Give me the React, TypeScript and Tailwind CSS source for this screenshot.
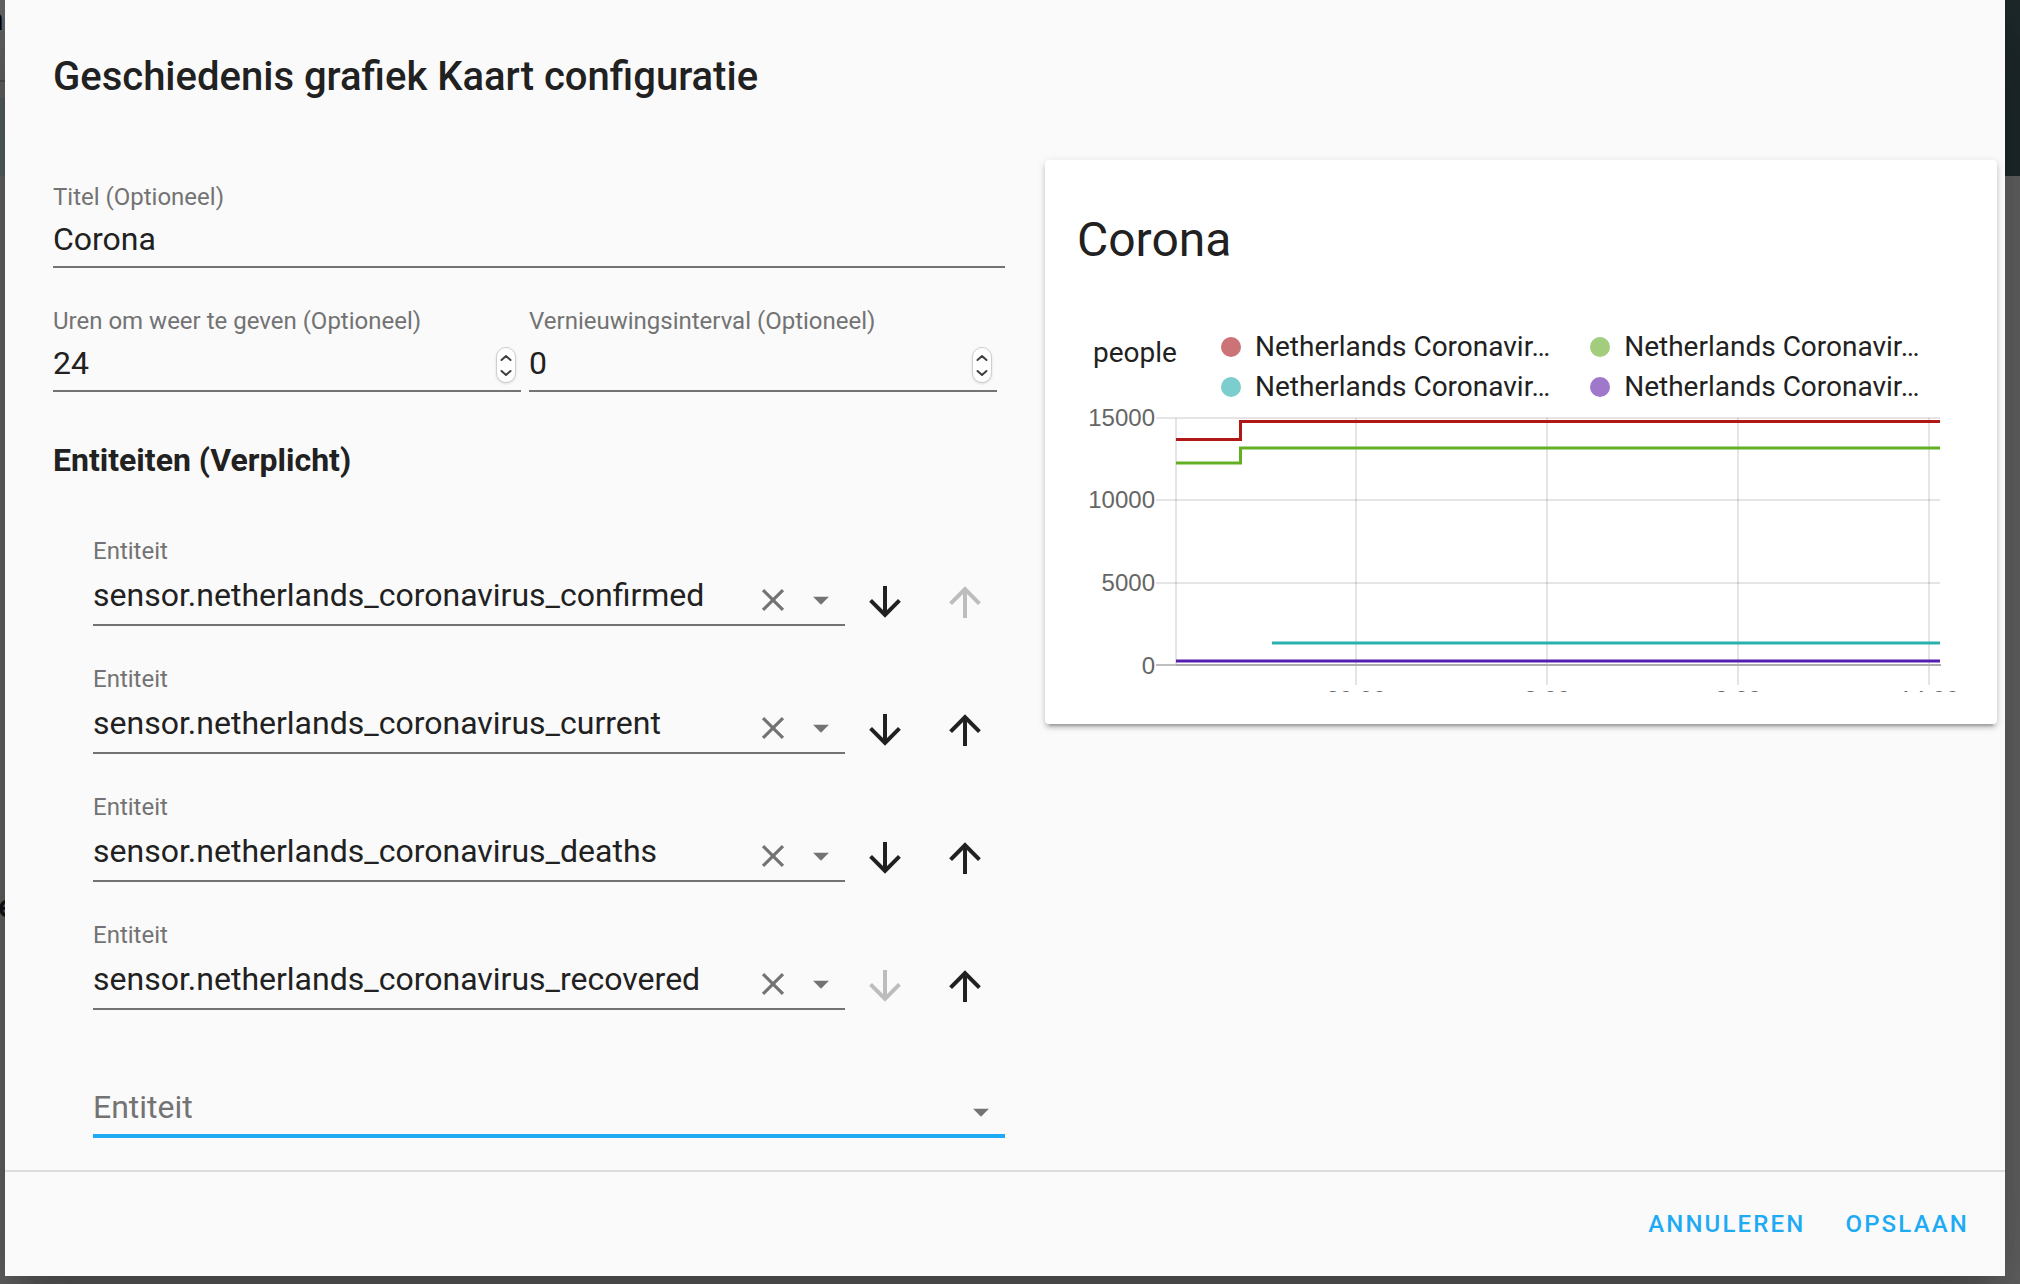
import { useState } from "react";
import type { ReactNode } from "react";

const ARROW_DOWN =
  "M11,4H13V16L18.5,10.5L19.92,11.92L12,19.84L4.08,11.92L5.5,10.5L11,16V4Z";
const ARROW_UP =
  "M13,20H11V8L5.5,13.5L4.08,12.08L12,4.16L19.92,12.08L18.5,13.5L13,8V20Z";
const CLOSE =
  "M19 6.41L17.59 5 12 10.59 6.41 5 5 6.41 10.59 12 5 17.59 6.41 19 12 13.41 17.59 19 19 17.59 13.41 12z";
const CARET = "M7 10l5 5 5-5z";

const entities = [
  "sensor.netherlands_coronavirus_confirmed",
  "sensor.netherlands_coronavirus_current",
  "sensor.netherlands_coronavirus_deaths",
  "sensor.netherlands_coronavirus_recovered",
];

const legend = [
  { id: "confirmed", dot: "bg-[#cb7377]" },
  { id: "current", dot: "bg-[#a1cd7d]" },
  { id: "deaths", dot: "bg-[#7bcecd]" },
  { id: "recovered", dot: "bg-[#9f78cc]" },
];

const yTicks = [
  { label: "15000", y: 8 },
  { label: "10000", y: 90 },
  { label: "5000", y: 173 },
];

const xTicks = [
  { label: "20:00", x: 279 },
  { label: "2:00", x: 470 },
  { label: "8:00", x: 661 },
  { label: "14:00", x: 852 },
];

const series = [
  { color: "#571cb0", points: "99,251 863,251" },
  { color: "#2bb0b0", points: "195,233 863,233" },
  { color: "#64b023", points: "99,53 163.5,53 163.5,38 863,38" },
  { color: "#b01717", points: "99,29.5 163.5,29.5 163.5,11.5 863,11.5" },
];

function Icon({ path, className }: { path: string; className: string }) {
  return (
    <svg viewBox="0 0 24 24" className={className} fill="currentColor" aria-hidden="true">
      <path d={path} />
    </svg>
  );
}

function Field({
  id,
  label,
  value,
  type = "text",
  children,
}: {
  id: string;
  label: string;
  value: string;
  type?: string;
  children?: ReactNode;
}) {
  return (
    <div className="flex flex-col border-b-2 border-[#737373] pb-0.5">
      <label htmlFor={id} className="text-2xl leading-[34px] text-[#737373]">
        {label}
      </label>
      <div className="flex h-[50px]">
        <input
          id={id}
          type={type}
          defaultValue={value}
          className="w-full min-w-0 flex-1 bg-transparent text-[32px] outline-none [appearance:textfield] [&::-webkit-inner-spin-button]:appearance-none"
        />
        {children}
      </div>
    </div>
  );
}

function Spinner({ label }: { label: string }) {
  return (
    <div className="mr-[5px] mb-[5px] flex h-9 w-5 flex-col self-end rounded-full border border-[#cfcfcf] bg-white py-0.5 text-[#404040] shadow-sm">
      <button type="button" aria-label={`${label} verhogen`} className="flex flex-1 items-center justify-center">
        <svg viewBox="0 0 12 8" className="h-2 w-3" fill="none" stroke="currentColor" strokeWidth="2" strokeLinecap="round" strokeLinejoin="round">
          <path d="M1.5 6l4.5-4 4.5 4" />
        </svg>
      </button>
      <button type="button" aria-label={`${label} verlagen`} className="flex flex-1 items-center justify-center">
        <svg viewBox="0 0 12 8" className="h-2 w-3" fill="none" stroke="currentColor" strokeWidth="2" strokeLinecap="round" strokeLinejoin="round">
          <path d="M1.5 2l4.5 4 4.5-4" />
        </svg>
      </button>
    </div>
  );
}

function MoveButton({ path, label, disabled }: { path: string; label: string; disabled: boolean }) {
  return (
    <button
      type="button"
      aria-label={label}
      disabled={disabled}
      className="flex h-12 w-20 items-center justify-center disabled:text-[#bdbdbd]"
    >
      <Icon path={path} className="size-12" />
    </button>
  );
}

function EntityRow({ value, index, count }: { value: string; index: number; count: number }) {
  const id = `entity-${index}`;
  return (
    <li className="flex items-end">
      <div className="flex min-w-0 flex-1 flex-col border-b-2 border-[#737373] pb-1">
        <label htmlFor={id} className="text-2xl leading-[38px] text-[#737373]">
          Entiteit
        </label>
        <div className="flex h-[50px]">
          <input
            id={id}
            type="text"
            defaultValue={value}
            className="w-full min-w-0 flex-1 bg-transparent text-[32px] outline-none"
          />
          <button type="button" aria-label="Wissen" className="flex h-10 w-12 items-center justify-center self-end text-[#737373]">
            <Icon path={CLOSE} className="size-[38px]" />
          </button>
          <button type="button" aria-label="Openen" className="flex h-10 w-12 items-center justify-center self-end text-[#737373]">
            <Icon path={CARET} className="size-[38px]" />
          </button>
        </div>
      </div>
      <MoveButton path={ARROW_DOWN} label="Omlaag" disabled={index === count - 1} />
      <MoveButton path={ARROW_UP} label="Omhoog" disabled={index === 0} />
    </li>
  );
}

function HistoryChart() {
  return (
    <svg viewBox="0 -4 888 286" className="block w-full overflow-hidden" role="img" aria-label="Corona">
      <g stroke="#000000" strokeOpacity="0.1" strokeWidth="2">
        {yTicks.map((t) => (
          <line key={t.label} x1="79" x2="863" y1={t.y} y2={t.y} />
        ))}
        <line x1="99" x2="99" y1="8" y2="256" />
        {xTicks.map((t) => (
          <line key={t.label} x1={t.x} x2={t.x} y1="8" y2="275" />
        ))}
      </g>
      <line x1="79" x2="99" y1="255" y2="255" stroke="#bfbfbf" strokeWidth="2" />
      <line x1="99" x2="864" y1="255" y2="255" stroke="#adadad" strokeWidth="2" />
      {series.map((s) => (
        <polyline key={s.color} points={s.points} fill="none" stroke={s.color} strokeWidth="3" />
      ))}
      <g fill="#666666" fontSize="24" className="font-['Liberation_Sans',Arial,sans-serif]">
        {[...yTicks, { label: "0", y: 256 }].map((t) => (
          <text key={t.label} x="78" y={t.y + 8} textAnchor="end">
            {t.label}
          </text>
        ))}
        {xTicks.map((t) => (
          <text key={t.label} x={t.x} y="298" textAnchor="middle">
            {t.label}
          </text>
        ))}
      </g>
    </svg>
  );
}

function Backdrop() {
  return (
    <div aria-hidden="true" className="absolute inset-0 flex flex-col overflow-hidden bg-[#646464]">
      <div className="flex h-44 justify-between">
        <div className="flex w-10 flex-col">
          <div className="flex h-20 items-start text-[32px] leading-[38px] text-black">
            <span className="-ml-3.5">n</span>
          </div>
          <div className="h-0.5 bg-[#505050]" />
          <div className="mt-4 flex-1 bg-[#566064]" />
        </div>
        <div className="w-20 bg-[#1e292c]" />
      </div>
      <div className="mt-[708px] flex h-11 text-[32px] leading-[44px] font-medium text-[#141414]">
        <span className="-ml-0.5">e</span>
      </div>
    </div>
  );
}

export default function App() {
  const [newEntity, setNewEntity] = useState("");

  return (
    <div className="relative min-h-screen overflow-hidden pr-[15px] pb-2 pl-[5px] font-[Roboto,sans-serif] text-[#212121]">
      <Backdrop />
      <div
        role="dialog"
        aria-labelledby="dialog-title"
        className="relative flex min-h-[calc(100vh-8px)] flex-col bg-[#fafafa] shadow-[0_22px_30px_-14px_rgba(0,0,0,0.2),0_48px_76px_6px_rgba(0,0,0,0.14),0_18px_92px_16px_rgba(0,0,0,0.12)]"
      >
        <h2 id="dialog-title" className="px-12 pt-[52px] text-[40px] leading-[50px] font-medium">
          Geschiedenis grafiek Kaart configuratie
        </h2>

        <div className="mt-[58px] grid flex-1 grid-cols-2 items-start gap-10 pr-2 pb-8 pl-12">
          <form className="min-w-0 pt-5">
            <Field id="title" label="Titel (Optioneel)" value="Corona" />
            <div className="mt-9 grid grid-cols-2 gap-2 pr-2">
              <Field id="hours" label="Uren om weer te geven (Optioneel)" value="24" type="number">
                <Spinner label="Uren" />
              </Field>
              <Field id="refresh" label="Vernieuwingsinterval (Optioneel)" value="0" type="number">
                <Spinner label="Interval" />
              </Field>
            </div>

            <h3 className="mt-12 text-[32px] leading-10 font-bold">Entiteiten (Verplicht)</h3>
            <ul className="mt-[52px] flex flex-col gap-[34px] pl-10">
              {entities.map((value, i) => (
                <EntityRow key={value} value={value} index={i} count={entities.length} />
              ))}
            </ul>
            <div className="mt-[72px] ml-10 flex h-14 border-b-4 border-[#1fabf4] pb-0.5">
              <input
                type="text"
                aria-label="Entiteit"
                placeholder="Entiteit"
                value={newEntity}
                onChange={(e) => setNewEntity(e.target.value)}
                className="w-full min-w-0 flex-1 bg-transparent text-[32px] outline-none placeholder:text-[#737373]"
              />
              <button type="button" aria-label="Openen" className="flex h-10 w-12 items-center justify-center self-end text-[#737373]">
                <Icon path={CARET} className="size-[38px]" />
              </button>
            </div>
          </form>

          <section className="min-w-0 rounded bg-white px-8 pt-8 pb-8 shadow-[0_4px_4px_0_rgba(0,0,0,0.14),0_2px_10px_0_rgba(0,0,0,0.12),0_6px_2px_-4px_rgba(0,0,0,0.2)]">
            <h1 className="text-5xl leading-[96px]">Corona</h1>
            <div className="flex items-start pt-[39px] pl-4 text-[28px] leading-[39px] whitespace-nowrap">
              <div className="mt-1.5 w-32">people</div>
              <ul className="grid grid-cols-[max-content_max-content] gap-x-10 gap-y-px">
                {legend.map((item) => (
                  <li key={item.id} className="flex items-center gap-3.5">
                    <span className={`size-5 rounded-full ${item.dot}`} />
                    Netherlands Coronavir…
                  </li>
                ))}
              </ul>
            </div>
            <HistoryChart />
          </section>
        </div>

        <footer className="flex h-[106px] items-center justify-end gap-2 border-t-2 border-[#dcdcdc] px-5">
          <button type="button" className="h-[72px] px-4 text-2xl font-medium tracking-[0.09em] text-[#1fabf4] uppercase">
            Annuleren
          </button>
          <button type="button" className="h-[72px] px-4 text-2xl font-medium tracking-[0.09em] text-[#1fabf4] uppercase">
            Opslaan
          </button>
        </footer>
      </div>
    </div>
  );
}
